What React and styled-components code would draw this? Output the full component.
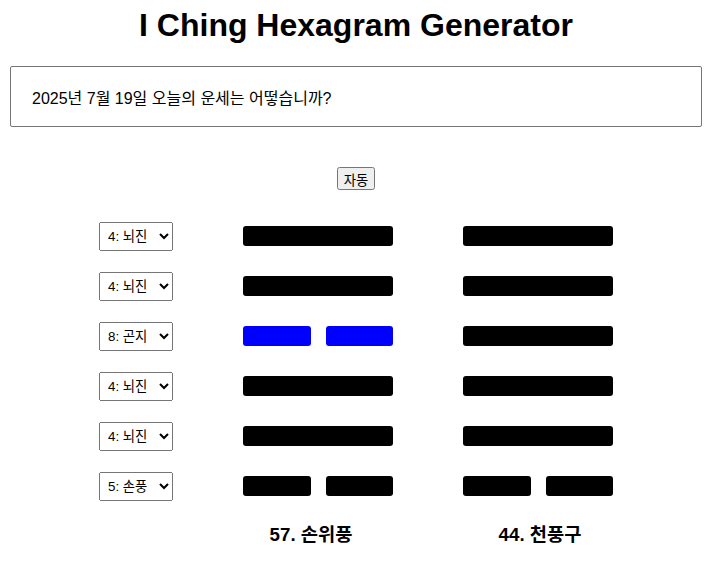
import React, { useState } from "react";
import styled, { createGlobalStyle } from "styled-components";

const Global = createGlobalStyle`
  html, body { margin: 0; padding: 0; background: #fff; }
  body { font-family: "Liberation Sans", "Noto Sans CJK KR", Arial, sans-serif; color: #000; }
`;

const Page = styled.div`
  width: 692px;
  padding: 7px 0 0 10px;
  display: flex;
  flex-direction: column;
  align-items: center;
`;

const Title = styled.h1`
  margin: 0;
  font-size: 32px;
  line-height: 37px;
  font-weight: bold;
  text-align: center;
`;

const Question = styled.input`
  box-sizing: border-box;
  margin-top: 22px;
  width: 692px;
  height: 61px;
  padding: 0 21px;
  border: 1px solid #767676;
  border-radius: 2px;
  font-family: "Liberation Sans", "Noto Sans CJK KR", Arial, sans-serif;
  font-size: 16px;
  color: #000;
  outline: none;
`;

const AutoButton = styled.button`
  margin-top: 40px;
  font-family: "Liberation Sans", "Noto Sans CJK KR", Arial, sans-serif;
  font-size: 13.33px;
  height: 23px;
  padding: 1px 5px;
`;

const Rows = styled.div`
  margin-top: 31px;
  display: flex;
  flex-direction: column;
  gap: 20px;
`;

const Row = styled.div`
  display: grid;
  grid-template-columns: 74px 150px 150px;
  column-gap: 70px;
  align-items: center;
  height: 30px;
`;

const Select = styled.select`
  width: 74px;
  height: 29px;
  font-family: "Liberation Sans", "Noto Sans CJK KR", Arial, sans-serif;
  font-size: 13.33px;
  padding: 0 4px;
`;

const Line = styled.div`
  display: flex;
  justify-content: space-between;
  height: 20px;
`;

const Segment = styled.div`
  height: 20px;
  width: ${(p) => p.$w}px;
  background: ${(p) => p.$color};
  border-radius: 3px;
`;

const Labels = styled.div`
  margin-top: 23px;
  display: grid;
  grid-template-columns: 74px 150px 150px;
  column-gap: 70px;
`;

const Label = styled.div`
  font-size: 18.72px;
  font-weight: bold;
  line-height: 22px;
  text-align: center;
  padding-right: ${(p) => p.$pr || 0}px;
  padding-left: ${(p) => p.$pl || 0}px;
`;

const OPTIONS = ["1: 건천", "2: 태택", "3: 이화", "4: 뇌진", "5: 손풍", "6: 감수", "7: 간산", "8: 곤지"];

function HexLine({ kind, color }) {
  if (kind === "solid") {
    return (
      <Line>
        <Segment $w={150} $color={color} />
      </Line>
    );
  }
  return (
    <Line>
      <Segment $w={68} $color={color} />
      <Segment $w={67} $color={color} />
    </Line>
  );
}

const DATA = [
  { sel: 3, left: ["solid", "#000"], right: ["solid", "#000"] },
  { sel: 3, left: ["solid", "#000"], right: ["solid", "#000"] },
  { sel: 7, left: ["broken", "#0000ff"], right: ["solid", "#000"] },
  { sel: 3, left: ["solid", "#000"], right: ["solid", "#000"] },
  { sel: 3, left: ["solid", "#000"], right: ["solid", "#000"] },
  { sel: 4, left: ["broken", "#000"], right: ["broken", "#000"] },
];

export default function App() {
  const [sels, setSels] = useState(DATA.map((d) => d.sel));
  return (
    <Page>
      <Global />
      <Title>I Ching Hexagram Generator</Title>
      <Question defaultValue="2025년 7월 19일 오늘의 운세는 어떻습니까?" />
      <AutoButton>자동</AutoButton>
      <Rows>
        {DATA.map((d, i) => (
          <Row key={i}>
            <Select
              value={sels[i]}
              onChange={(e) => {
                const n = [...sels];
                n[i] = Number(e.target.value);
                setSels(n);
              }}
            >
              {OPTIONS.map((o, j) => (
                <option key={j} value={j}>
                  {o}
                </option>
              ))}
            </Select>
            <HexLine kind={d.left[0]} color={d.left[1]} />
            <HexLine kind={d.right[0]} color={d.right[1]} />
          </Row>
        ))}
      </Rows>
      <Labels>
        <div />
        <Label $pr={14}>57. 손위풍</Label>
        <Label $pl={4}>44. 천풍구</Label>
      </Labels>
    </Page>
  );
}
